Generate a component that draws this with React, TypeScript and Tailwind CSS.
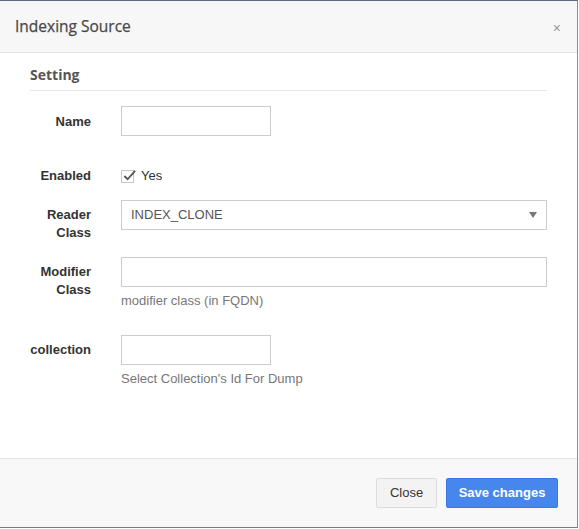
import React from "react";

const arial = { fontFamily: '"Liberation Sans", Arial, sans-serif' };

function Label({ children }: { children: React.ReactNode }) {
  return (
    <div className="w-[61px] shrink-0 text-right font-bold text-[13px] leading-[18px] text-[#333]">
      {children}
    </div>
  );
}

export default function App() {
  return (
    <div
      className="w-[578px] h-[528px] flex flex-col bg-white border-t border-t-[#5c6b86] border-r border-b border-r-[#8c8c8c] border-b-[#7a7a7a]"
      style={arial}
    >
      <div className="h-[52px] shrink-0 bg-[#f7f7f7] border-b border-[#e5e5e5] flex items-center justify-between pl-[15px] pr-[16px]">
        <div
          className="text-[15.5px] font-normal text-[#484848] pt-[1px]"
          style={{ fontFamily: '"Open Sans", "Noto Sans", sans-serif', WebkitTextStroke: "0.25px #484848" }}
        >
          Indexing Source
        </div>
        <div className="text-[#999] text-[14px] leading-none pt-[3px]">×</div>
      </div>
      <div className="flex-1 px-[30px] pt-[12px]">
        <div
          className="text-[14px] font-bold leading-[20px] pb-[5px] border-b border-[#e5e5e5] text-[#555]"
          style={{ fontFamily: '"Open Sans", "Noto Sans", sans-serif' }}
        >
          Setting
        </div>
        <div className="flex gap-[30px] mt-[15px] items-start">
          <div className="pt-[7px]">
            <Label>Name</Label>
          </div>
          <div className="w-[150px] h-[30px] border border-[#ccc]" />
        </div>
        <div className="flex gap-[30px] mt-[30px] items-center h-[20px]">
          <Label>Enabled</Label>
          <div className="flex items-center gap-[7px]">
            <div className="w-[13px] h-[13px] border border-[#c6c6c6] bg-white relative">
              <svg viewBox="0 0 16 16" className="absolute left-[0px] top-[-3px] w-[15px] h-[15px]">
                <path d="M2.5 8.5 L6 12 L14 3" fill="none" stroke="#555" strokeWidth="2" />
              </svg>
            </div>
            <span className="text-[13px] text-[#333]">Yes</span>
          </div>
        </div>
        <div className="flex gap-[30px] mt-[14px] items-start">
          <div className="pt-[6px]">
            <Label>
              Reader
              <br />
              Class
            </Label>
          </div>
          <div className="flex-1 h-[30px] border border-[#ccc] flex items-center justify-between pl-[9px] pr-[9px]">
            <span className="text-[13px] text-[#555]">INDEX_CLONE</span>
            <svg width="8" height="6" viewBox="0 0 8 6">
              <path d="M0 0 H8 L4 6 Z" fill="#777" />
            </svg>
          </div>
        </div>
        <div className="flex gap-[30px] mt-[15px] items-start">
          <div className="pt-[6px]">
            <Label>
              Modifier
              <br />
              Class
            </Label>
          </div>
          <div className="flex-1">
            <div className="h-[30px] border border-[#ccc]" />
            <div className="mt-[5px] text-[13px] leading-[18px] text-[#777]">modifier class (in FQDN)</div>
          </div>
        </div>
        <div className="flex gap-[30px] mt-[25px] items-start">
          <div className="pt-[6px]">
            <Label>collection</Label>
          </div>
          <div className="flex-1">
            <div className="w-[150px] h-[30px] border border-[#ccc]" />
            <div className="mt-[5px] text-[13px] leading-[18px] text-[#777]">Select Collection's Id For Dump</div>
          </div>
        </div>
      </div>
      <div className="h-[69px] shrink-0 bg-[#f8f8f8] border-t border-[#e5e5e5] flex items-center justify-end gap-[9px] pr-[19px] pb-[1px]">
        <button className="w-[61px] h-[30px] bg-[#f3f3f3] border border-[#dcdcdc] rounded-[2px] text-[13px] text-[#333]">
          Close
        </button>
        <button className="w-[112px] h-[30px] bg-[#4787ed] border border-[#3b79e0] rounded-[2px] text-[13px] font-bold text-white">
          Save changes
        </button>
      </div>
    </div>
  );
}
